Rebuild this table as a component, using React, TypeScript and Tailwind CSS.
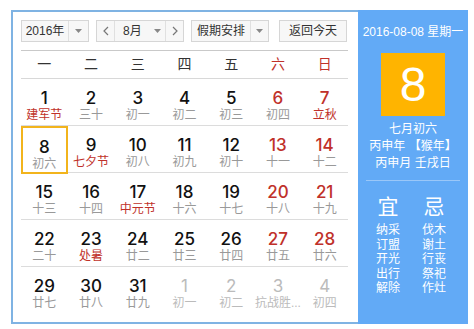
import React from 'react';

interface Day {
  n: number;
  lunar: string;
  fest?: boolean;
  other?: boolean;
}

const weeks: Day[][] = [
  [
    { n: 1, lunar: '建军节', fest: true },
    { n: 2, lunar: '三十' },
    { n: 3, lunar: '初一' },
    { n: 4, lunar: '初二' },
    { n: 5, lunar: '初三' },
    { n: 6, lunar: '初四' },
    { n: 7, lunar: '立秋', fest: true },
  ],
  [
    { n: 8, lunar: '初六' },
    { n: 9, lunar: '七夕节', fest: true },
    { n: 10, lunar: '初八' },
    { n: 11, lunar: '初九' },
    { n: 12, lunar: '初十' },
    { n: 13, lunar: '十一' },
    { n: 14, lunar: '十二' },
  ],
  [
    { n: 15, lunar: '十三' },
    { n: 16, lunar: '十四' },
    { n: 17, lunar: '中元节', fest: true },
    { n: 18, lunar: '十六' },
    { n: 19, lunar: '十七' },
    { n: 20, lunar: '十八' },
    { n: 21, lunar: '十九' },
  ],
  [
    { n: 22, lunar: '二十' },
    { n: 23, lunar: '处暑', fest: true },
    { n: 24, lunar: '廿二' },
    { n: 25, lunar: '廿三' },
    { n: 26, lunar: '廿四' },
    { n: 27, lunar: '廿五' },
    { n: 28, lunar: '廿六' },
  ],
  [
    { n: 29, lunar: '廿七' },
    { n: 30, lunar: '廿八' },
    { n: 31, lunar: '廿九' },
    { n: 1, lunar: '初一', other: true },
    { n: 2, lunar: '初二', other: true },
    { n: 3, lunar: '抗战胜...', other: true },
    { n: 4, lunar: '初四', other: true },
  ],
];

const weekdays = ['一', '二', '三', '四', '五', '六', '日'];
const yi = ['纳采', '订盟', '开光', '出行', '解除'];
const ji = ['伐木', '谢土', '行丧', '祭祀', '作灶'];

const Caret = () => (
  <svg width="7" height="4" viewBox="0 0 7 4" aria-hidden="true">
    <path d="M0 0h7L3.5 4z" fill="#888" />
  </svg>
);

const Chevron = ({ dir }: { dir: 'l' | 'r' }) => (
  <svg width="6" height="10" viewBox="0 0 6 10" aria-hidden="true">
    <path
      d={dir === 'l' ? 'M5 1L1 5l4 4' : 'M1 1l4 4-4 4'}
      fill="none"
      stroke="#777"
      strokeWidth="1.2"
    />
  </svg>
);

const DayCell = ({ day, col, selected }: { day: Day; col: number; selected: boolean }) => {
  const weekend = col >= 5;
  let numColor = 'text-[#111] font-medium';
  if (day.other) numColor = 'text-[#bbb] font-normal';
  else if (weekend) numColor = 'text-[#c0312a] font-medium';
  let lunarColor = 'text-[#999]';
  if (day.other) lunarColor = 'text-[#bbb]';
  else if (day.fest) lunarColor = 'text-[#c0312a]';

  return (
    <div
      className={`flex flex-col items-center pt-[9px] ${
        selected ? 'border-2 border-[#f2b41c] pt-[7px]' : ''
      }`}
    >
      <span className={`font-[Inter,sans-serif] text-[17px] leading-[20px] ${numColor}`}>{day.n}</span>
      <span className={`text-[12px] leading-[15px] whitespace-nowrap ${lunarColor}`}>{day.lunar}</span>
    </div>
  );
};

export default function App() {
  return (
    <div
      className="w-[474px] h-[329px] bg-white pt-[10px] pl-[11px]"
      style={{ fontFamily: '"Liberation Sans", "Noto Sans CJK SC", sans-serif' }}
    >
      <div className="flex w-[457px] h-[314px]">
        {/* left: month grid */}
        <div className="w-[347px] h-full border-2 border-r-0 border-[#7fb3e3] pt-[8px] pl-[8px] pr-[8px]">
          <div className="flex items-center h-[22px] text-[12px] text-[#333] whitespace-nowrap">
            <div className="flex h-full w-[68px] border border-[#d6d6d6] bg-[#f7f7f7]">
              <span className="flex-1 flex items-center justify-center">2016年</span>
              <span className="w-[20px] flex items-center justify-center border-l border-[#e0e0e0]">
                <Caret />
              </span>
            </div>
            <div className="flex h-full w-[88px] ml-[7px] border border-[#d6d6d6] bg-[#f7f7f7]">
              <span className="w-[18px] flex items-center justify-center border-r border-[#e0e0e0]">
                <Chevron dir="l" />
              </span>
              <span className="flex-1 flex items-center pl-[8px] gap-[12px]">
                <span>8月</span>
                <Caret />
              </span>
              <span className="w-[18px] flex items-center justify-center border-l border-[#e0e0e0]">
                <Chevron dir="r" />
              </span>
            </div>
            <div className="flex h-full w-[78px] ml-[7px] border border-[#d6d6d6] bg-[#f7f7f7]">
              <span className="flex-1 flex items-center justify-center">假期安排</span>
              <span className="w-[18px] flex items-center justify-center border-l border-[#e0e0e0]">
                <Caret />
              </span>
            </div>
            <div className="flex h-full w-[68px] ml-[10px] items-center justify-center border border-[#d6d6d6] bg-[#f7f7f7]">
              返回今天
            </div>
          </div>

          <div className="mt-[8px] w-[327px] border-t border-[#c9c9c9]">
            <div className="grid grid-cols-7 h-[28px] items-center border-b border-[#d8d8d8] text-[14px]">
              {weekdays.map((w, i) => (
                <span key={w} className={`text-center ${i >= 5 ? 'text-[#c0312a]' : 'text-[#333]'}`}>
                  {w}
                </span>
              ))}
            </div>
            {weeks.map((week, r) => (
              <div
                key={r}
                className={`grid grid-cols-7 h-[47px] ${r < weeks.length - 1 ? 'border-b border-[#dcdcdc]' : ''}`}
              >
                {week.map((d, c) => (
                  <DayCell key={c} day={d} col={c} selected={r === 1 && c === 0} />
                ))}
              </div>
            ))}
          </div>
        </div>

        {/* right: day detail */}
        <div className="w-[110px] h-full bg-[#62aaf6] flex flex-col items-center text-white">
          <div className="mt-[15px] text-[12px] leading-[14px] whitespace-nowrap">2016-08-08 星期一</div>
          <div className="mt-[14px] w-[64px] h-[63px] bg-[#ffb400] flex items-center justify-center text-[48px] leading-none">
            8
          </div>
          <div className="mt-[5px] text-[12px] leading-[17px] text-center">
            <div>七月初六</div>
            <div className="whitespace-nowrap">丙申年 【猴年】</div>
            <div className="whitespace-nowrap">丙申月 壬戌日</div>
          </div>
          <div className="mt-[8px] w-[94px] border-t border-[#9ac7f8]" />
          <div className="mt-[14px] grid grid-cols-2 w-[96px] pr-[4px]">
            <div className="flex flex-col items-center">
              <span className="text-[21px] leading-[24px]">宜</span>
              <div className="mt-[4px] text-[12px] leading-[14.5px] text-center">
                {yi.map((t) => (
                  <div key={t}>{t}</div>
                ))}
              </div>
            </div>
            <div className="flex flex-col items-center">
              <span className="text-[21px] leading-[24px]">忌</span>
              <div className="mt-[4px] text-[12px] leading-[14.5px] text-center">
                {ji.map((t) => (
                  <div key={t}>{t}</div>
                ))}
              </div>
            </div>
          </div>
        </div>
      </div>
    </div>
  );
}
